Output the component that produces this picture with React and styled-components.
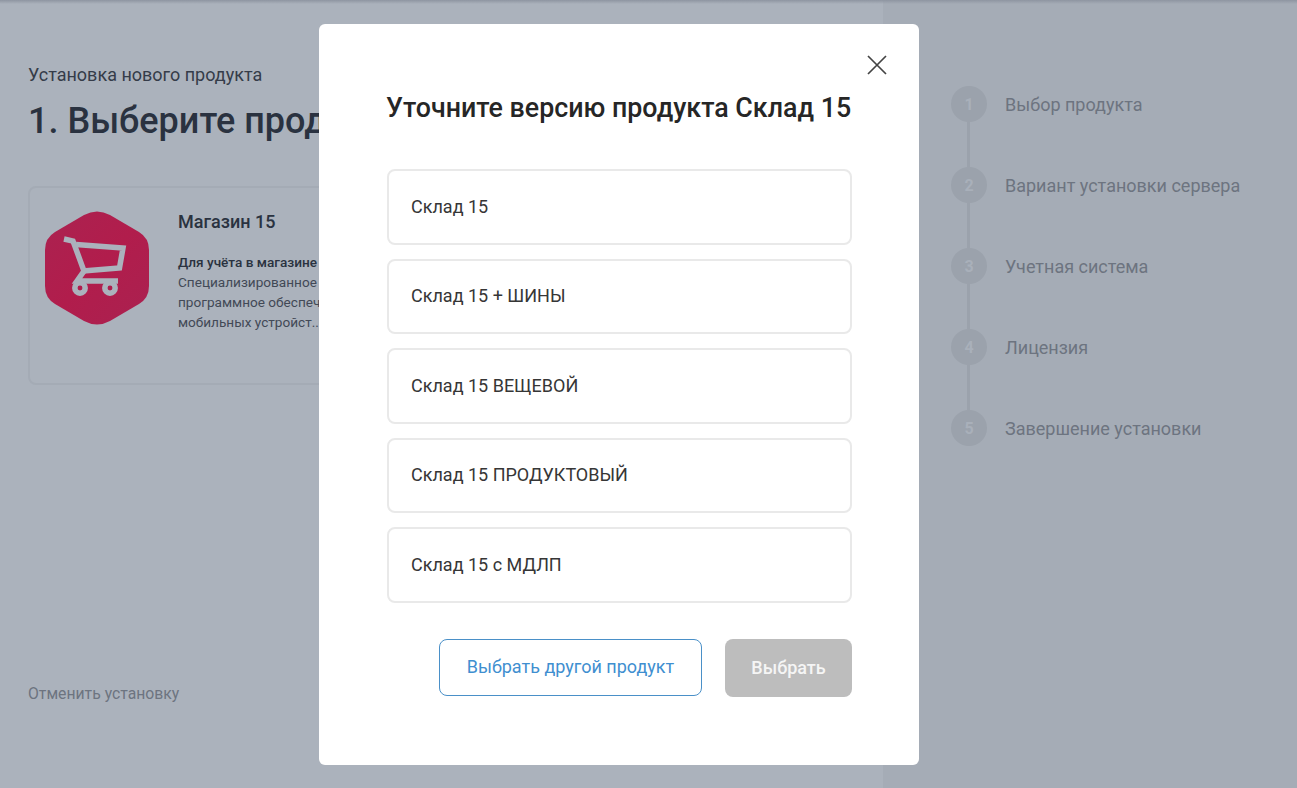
import React from "react";
import styled, { createGlobalStyle } from "styled-components";

const versions = ["Склад 15", "Склад 15 + ШИНЫ", "Склад 15 ВЕЩЕВОЙ", "Склад 15 ПРОДУКТОВЫЙ", "Склад 15 с МДЛП"];
const steps = ["Выбор продукта", "Вариант установки сервера", "Учетная система", "Лицензия", "Завершение установки"];

const CartIcon = () => (
  <svg width="106" height="114" viewBox="0 0 106 114">
    <defs>
      <linearGradient id="hex" x1="0" y1="0" x2="1" y2="1">
        <stop offset="0" stopColor="#ab2250" />
        <stop offset="0.5" stopColor="#b11d4c" />
        <stop offset="1" stopColor="#aa2150" />
      </linearGradient>
    </defs>
    <path
      d="M40 4Q53 -3 66 4L95 21Q105 27 105 39V75Q105 87 95 93L66 110Q53 117 40 110L11 93Q1 87 1 75V39Q1 27 11 21Z"
      fill="url(#hex)"
    />
    <g fill="none" stroke="#abb2bc" strokeWidth="5.5" strokeLinejoin="miter">
      <path d="M20 28L29 30L40 60L33 70H74" />
      <path d="M32 33.5L79 37L75.5 57L39 60" />
      <circle cx="36" cy="77" r="5.2" />
      <circle cx="66" cy="77" r="5.2" />
    </g>
  </svg>
);

const App = () => (
  <>
    <GlobalStyle />
    <Page>
      <Main>
        <Crumb>Установка нового продукта</Crumb>
        <Heading>1. Выберите продукт</Heading>
        <ProductCard>
          <CartIcon />
          <ProductInfo>
            <ProductName>Магазин 15</ProductName>
            <ProductText>
              <b>Для учёта в магазине</b>
              <span>Специализированное</span>
              <span>программное обеспечение</span>
              <span>мобильных устройст...</span>
            </ProductText>
          </ProductInfo>
        </ProductCard>
        <CancelLink>Отменить установку</CancelLink>
      </Main>
      <Side>
        {steps.map((step, i) => (
          <Step key={step} $last={i === steps.length - 1}>
            <StepNumber>{i + 1}</StepNumber>
            <StepLabel>{step}</StepLabel>
          </Step>
        ))}
      </Side>
      <Modal>
        <CloseButton aria-label="Закрыть">
          <svg width="20" height="20" viewBox="0 0 20 20" stroke="#444" strokeWidth="1.7" fill="none">
            <path d="M1 1L19 19M19 1L1 19" />
          </svg>
        </CloseButton>
        <ModalTitle>Уточните версию продукта Склад 15</ModalTitle>
        <OptionList>
          {versions.map((v) => (
            <Option key={v}>{v}</Option>
          ))}
        </OptionList>
        <Actions>
          <OutlineButton>Выбрать другой продукт</OutlineButton>
          <SubmitButton>Выбрать</SubmitButton>
        </Actions>
      </Modal>
    </Page>
  </>
);

export default App;

const GlobalStyle = createGlobalStyle`
  * { box-sizing: border-box; }
  body {
    margin: 0;
    font-family: Roboto, "Liberation Sans", sans-serif;
    overflow: hidden;
  }
`;

const Page = styled.div`
  position: relative;
  display: grid;
  grid-template-columns: 883px 1fr;
  height: 788px;
  background: #abb2bc;
  overflow: hidden;
  &::before {
    content: "";
    position: absolute;
    top: 0;
    left: 0;
    right: 0;
    height: 4px;
    background: linear-gradient(#8e95a1, rgba(142, 149, 161, 0));
  }
`;

const Main = styled.main`
  display: flex;
  flex-direction: column;
  padding: 64px 28px 0;
`;

const Crumb = styled.div`
  font-size: 18px;
  line-height: 21px;
  color: #353c49;
`;

const Heading = styled.h1`
  margin: 15px 0 0;
  font-size: 36px;
  line-height: 42px;
  font-weight: 500;
  color: #2a3240;
  white-space: nowrap;
`;

const ProductCard = styled.div`
  display: flex;
  align-items: flex-start;
  gap: 28px;
  height: 199px;
  margin-top: 44px;
  padding: 23px 14px;
  border: 2px solid #a4abb5;
  border-radius: 8px;
`;

const ProductInfo = styled.div`
  display: flex;
  flex-direction: column;
  margin-top: -1px;
`;

const ProductName = styled.div`
  font-size: 18px;
  line-height: 24px;
  font-weight: 500;
  color: #2a3240;
`;

const ProductText = styled.div`
  display: flex;
  flex-direction: column;
  margin-top: 18px;
  font-size: 13.6px;
  line-height: 20px;
  color: #424956;
  b {
    font-weight: 500;
    color: #2a3240;
  }
`;

const CancelLink = styled.a`
  margin-top: 299px;
  font-size: 15.75px;
  line-height: 20px;
  color: #6d7480;
`;

const Side = styled.aside`
  display: flex;
  flex-direction: column;
  padding: 86px 0 0 68px;
  background: #a5acb6;
`;

const Step = styled.div`
  position: relative;
  display: flex;
  align-items: center;
  gap: 18px;
  height: 36px;
  margin-bottom: 45px;
  ${(p) =>
    !p.$last &&
    `&::after {
      content: "";
      position: absolute;
      left: 16px;
      top: 36px;
      width: 3px;
      height: 45px;
      background: #9ba2ac;
    }`}
`;

const StepNumber = styled.div`
  flex: none;
  display: flex;
  align-items: center;
  justify-content: center;
  width: 36px;
  height: 36px;
  border-radius: 50%;
  background: #9ba2ac;
  color: #a9b0ba;
  font-size: 16px;
  font-weight: 700;
`;

const StepLabel = styled.div`
  font-size: 18px;
  color: #6d7480;
  white-space: nowrap;
`;

const Modal = styled.div`
  position: absolute;
  top: 24px;
  left: 319px;
  width: 600px;
  height: 741px;
  padding: 68px 67px 0 68px;
  background: #fff;
  border-radius: 6px;
`;

const CloseButton = styled.button`
  position: absolute;
  top: 31px;
  right: 32px;
  padding: 0;
  border: 0;
  background: none;
  display: flex;
`;

const ModalTitle = styled.h2`
  margin: 0 0 0 -1px;
  font-size: 26.8px;
  line-height: 32px;
  font-weight: 500;
  color: #262626;
  white-space: nowrap;
`;

const OptionList = styled.div`
  display: flex;
  flex-direction: column;
  gap: 14px;
  margin-top: 45px;
`;

const Option = styled.div`
  display: flex;
  align-items: center;
  height: 75.5px;
  padding: 0 0 1px 22px;
  border: 2px solid #e9e9e9;
  border-radius: 8px;
  font-size: 18px;
  color: #363636;
`;

const Actions = styled.div`
  display: flex;
  justify-content: flex-end;
  gap: 23px;
  margin-top: 36px;
`;

const OutlineButton = styled.button`
  width: 263px;
  height: 57px;
  padding: 0 0 1px;
  border: 1px solid #4a90c8;
  border-radius: 8px;
  background: #fff;
  color: #3f8fd0;
  font: 400 18px Roboto, sans-serif;
`;

const SubmitButton = styled.button`
  width: 127px;
  height: 58px;
  padding: 0 0 1px;
  border: 0;
  border-radius: 8px;
  background: #bdbdbd;
  color: #f5f5f5;
  font: 500 18px Roboto, sans-serif;
`;
